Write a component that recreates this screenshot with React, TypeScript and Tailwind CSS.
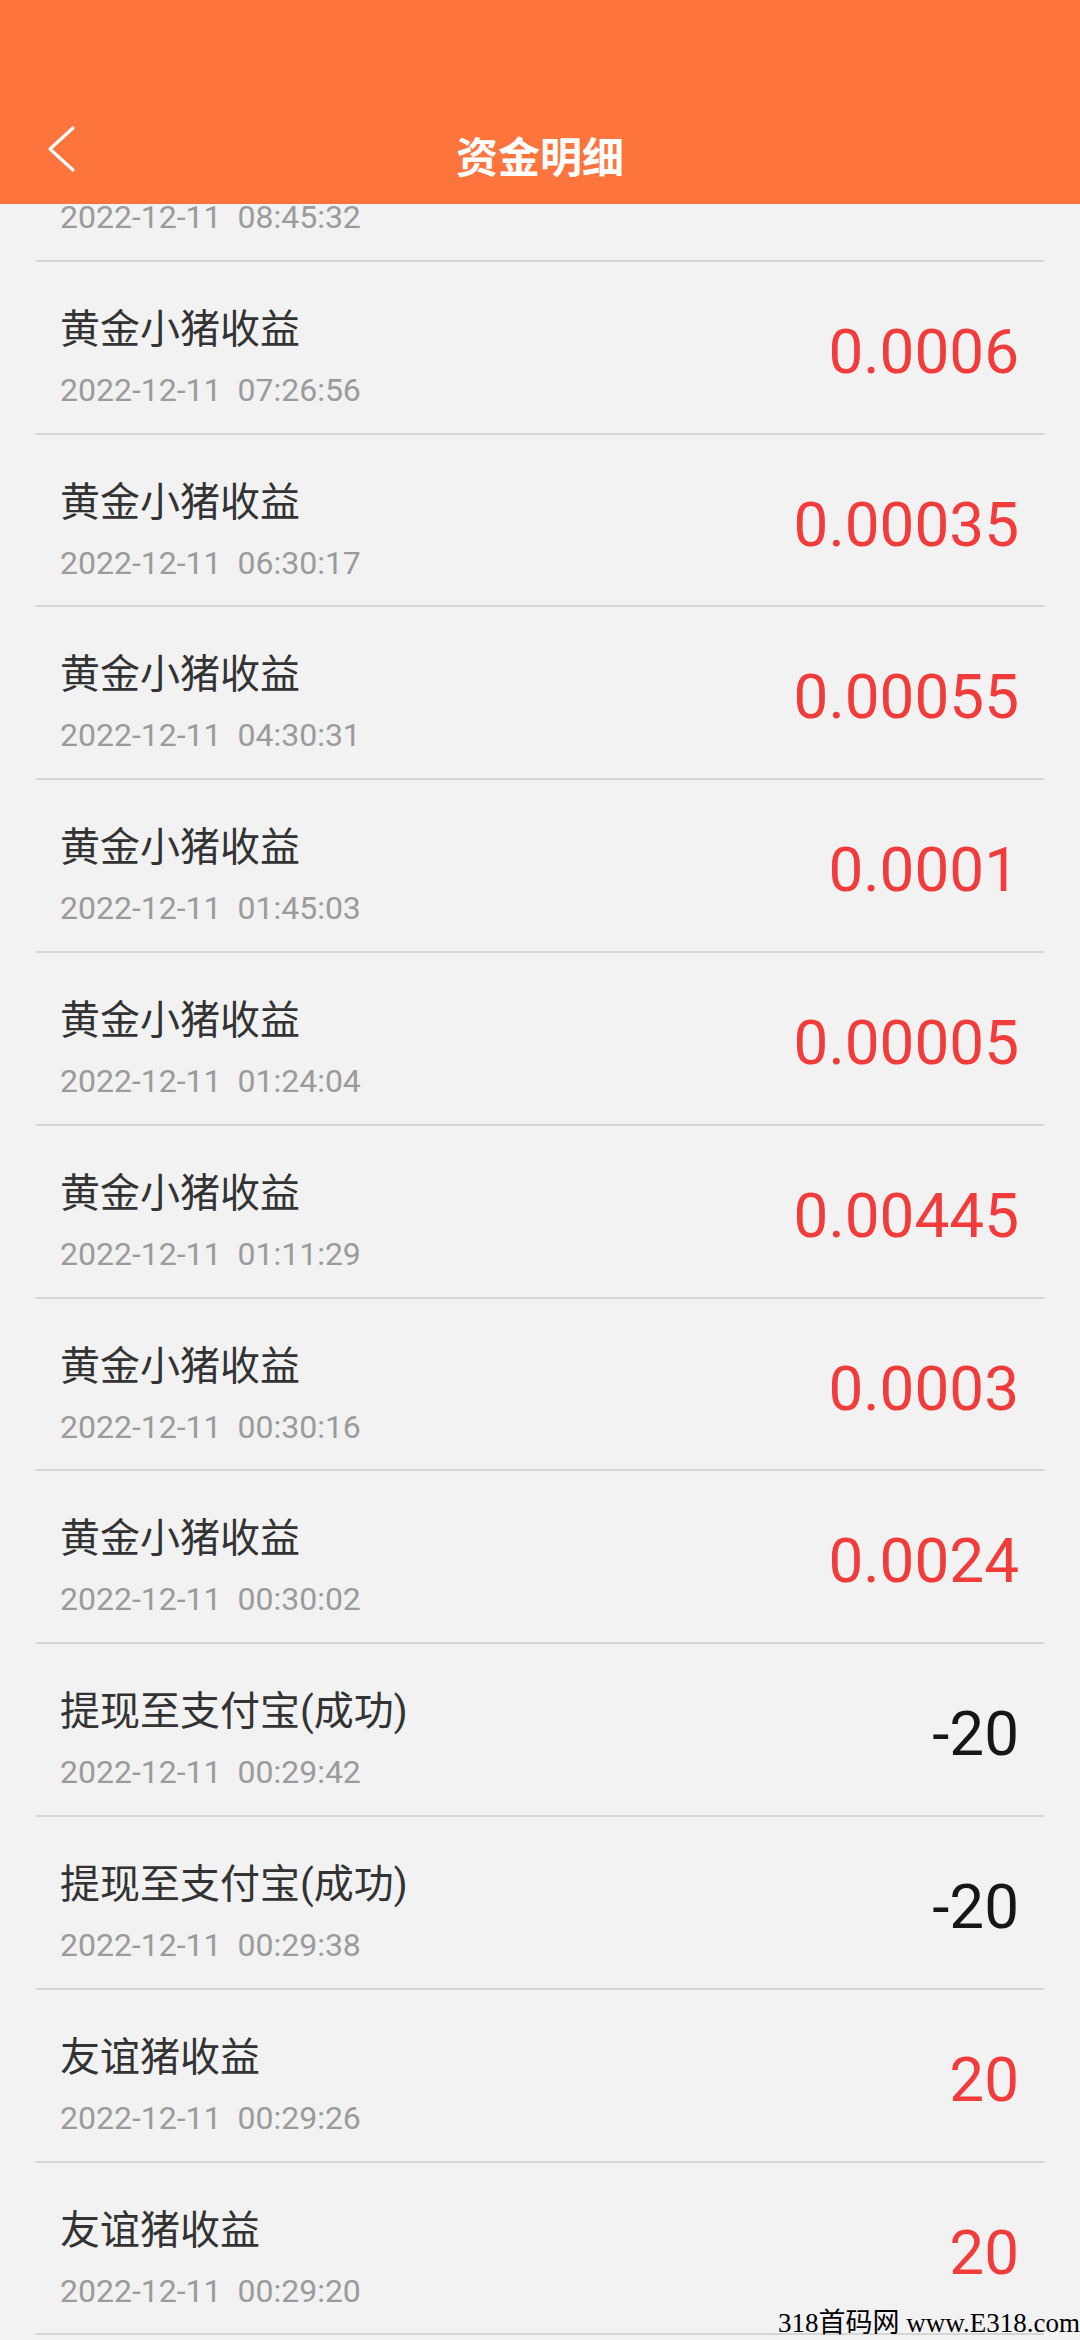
import React from "react";

type Row = { title: string; date: string; amount: string; neg?: boolean };

const rows: Row[] = [
  { title: "黄金小猪收益", date: "2022-12-11 08:45:32", amount: "0.0002" },
  { title: "黄金小猪收益", date: "2022-12-11 07:26:56", amount: "0.0006" },
  { title: "黄金小猪收益", date: "2022-12-11 06:30:17", amount: "0.00035" },
  { title: "黄金小猪收益", date: "2022-12-11 04:30:31", amount: "0.00055" },
  { title: "黄金小猪收益", date: "2022-12-11 01:45:03", amount: "0.0001" },
  { title: "黄金小猪收益", date: "2022-12-11 01:24:04", amount: "0.00005" },
  { title: "黄金小猪收益", date: "2022-12-11 01:11:29", amount: "0.00445" },
  { title: "黄金小猪收益", date: "2022-12-11 00:30:16", amount: "0.0003" },
  { title: "黄金小猪收益", date: "2022-12-11 00:30:02", amount: "0.0024" },
  { title: "提现至支付宝(成功)", date: "2022-12-11 00:29:42", amount: "-20", neg: true },
  { title: "提现至支付宝(成功)", date: "2022-12-11 00:29:38", amount: "-20", neg: true },
  { title: "友谊猪收益", date: "2022-12-11 00:29:26", amount: "20" },
  { title: "友谊猪收益", date: "2022-12-11 00:29:20", amount: "20" },
  { title: "友谊猪收益", date: "2022-12-11 00:29:11", amount: "20" },
];

function ListRow({ r }: { r: Row }) {
  return (
    <div className="px-[36px]">
      <div className="h-[172.8px] border-b-2 border-[#d6d6d6] flex items-start justify-between pl-[24px] pr-[25px]">
        <div className="flex flex-col pt-[48px]">
          <div className="text-[40px] leading-[40px] text-[#333333] whitespace-nowrap">{r.title}</div>
          <div className="mt-[24px] text-[32px] leading-[32px] text-[#9b9b9b] whitespace-pre">{r.date.replace(" ", "  ")}</div>
        </div>
        <div
          className={
            "pt-[59px] text-[62px] leading-[62px] whitespace-nowrap " +
            (r.neg ? "text-[#161616]" : "text-[#f23b3b]")
          }
        >
          {r.amount}
        </div>
      </div>
    </div>
  );
}

export default function App() {
  return (
    <div
      className="relative h-[2340px] w-full overflow-hidden bg-[#f2f2f2] flex flex-col"
      style={{ fontFamily: "Roboto, 'Noto Sans CJK SC', sans-serif" }}
    >
      <header className="h-[204px] shrink-0 bg-[#fe743d] pt-[116px] relative z-10">
        <div className="relative h-[78px] flex items-center justify-center">
          <svg
            className="absolute left-[47px] top-[9px]"
            width="30"
            height="48"
            viewBox="0 0 30 48"
            fill="none"
          >
            <polyline
              points="26,3 3,24 26,45"
              stroke="#ffffff"
              strokeWidth="3.2"
              strokeLinecap="round"
              strokeLinejoin="round"
            />
          </svg>
          <h1 className="text-[42px] leading-[42px] font-bold text-white" style={{ fontFamily: "'Noto Sans CJK SC', sans-serif" }}>
            资金明细
          </h1>
        </div>
      </header>
      <main className="flex-1 overflow-hidden">
        <div className="-mt-[115px]">
          {rows.map((r, i) => (
            <ListRow key={i} r={r} />
          ))}
        </div>
      </main>
      <div
        className="absolute right-0 bottom-[3px] text-[27px] leading-[27px] text-black whitespace-pre"
        style={{ fontFamily: "'Liberation Serif', 'Noto Sans CJK SC', serif" }}
      >
        318首码网 www.E318.com
      </div>
    </div>
  );
}
